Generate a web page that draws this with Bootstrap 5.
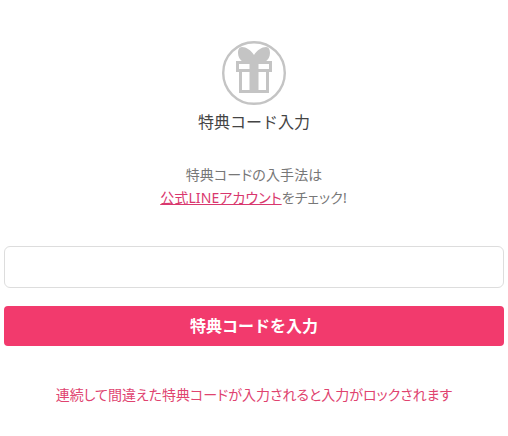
<!DOCTYPE html>
<html lang="ja"><head><meta charset="utf-8">
<link rel="stylesheet" href="https://cdn.jsdelivr.net/npm/bootstrap@5.3.0/dist/css/bootstrap.min.css">
<style>
body{font-family:"Noto Sans","Noto Sans CJK JP",sans-serif;background:#fff;}
.wrap{padding:41px 4px 0;}
.giftc{width:64px;height:64px;}
.ttl{font-size:16px;color:#444;line-height:22px;margin-top:6px;}
.desc{font-size:14px;color:#777;line-height:23px;margin-top:30px;font-feature-settings:"palt";letter-spacing:.1px;}
.desc a{color:#d9376e;margin-left:-1px;}
.inp{height:42px;border-color:#ddd;margin-top:37px;}
.sub{height:40px;background:#f23a6d;border:0;color:#fff;font-weight:700;font-size:16px;margin-top:18px;border-radius:4px;}
.warn{color:#e0436f;font-size:14px;line-height:20px;margin-top:39px;font-feature-settings:"palt";}
</style></head><body>
<div class="wrap text-center">
<svg class="giftc d-block mx-auto" viewBox="0 0 64 64"><circle cx="32" cy="32" r="30.8" fill="none" stroke="#c4c4c4" stroke-width="2.4"/><path d="M32 14C29 9 24 6 20 6 17 6 16 9 16 12 16 16 18 19 21 21H43C46 19 48 16 48 12 48 9 47 6 44 6 40 6 35 9 32 14z" fill="#c4c4c4"/><rect x="15.5" y="21.5" width="33" height="8" fill="#fff" stroke="#c4c4c4" stroke-width="3"/><rect x="18.5" y="29.5" width="27" height="21" fill="#fff" stroke="#c4c4c4" stroke-width="3"/><rect x="27.5" y="14" width="9" height="38" fill="#c4c4c4"/></svg>
<div class="ttl">特典コード入力</div>
<p class="desc mb-0">特典コードの入手法は<br><a href="#">公式LINEアカウント</a>をチェック!</p>
<input class="form-control inp" type="text">
<button class="btn sub w-100">特典コードを入力</button>
<p class="warn mb-0">連続して間違えた特典コードが入力されると入力がロックされます</p>
</div>
<script src="https://cdn.jsdelivr.net/npm/bootstrap@5.3.0/dist/js/bootstrap.bundle.min.js"></script>
</body></html>
